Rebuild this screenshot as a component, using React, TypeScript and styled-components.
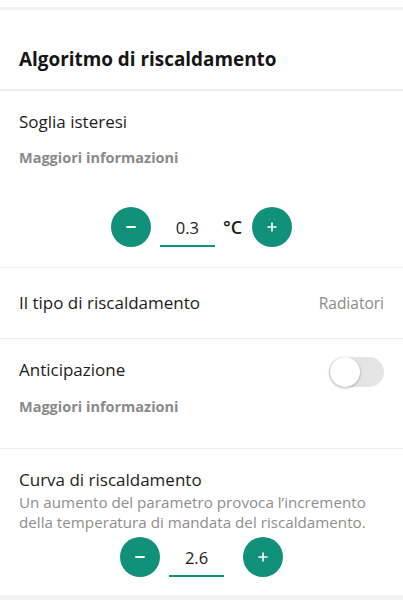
import React from "react";
import styled, { createGlobalStyle } from "styled-components";

const Global = createGlobalStyle`
  html, body { margin: 0; padding: 0; background: #ffffff; }
  body { font-family: "Open Sans", "Noto Sans", sans-serif; color: #1c1c1c; }
  * { box-sizing: border-box; }
`;

const Page = styled.div`
  width: 403px;
  height: 600px;
  display: flex;
  flex-direction: column;
  background: #f2f2f2;
  overflow: hidden;
`;

const PrevCardEnd = styled.div`
  height: 7px;
  background: #ffffff;
  flex: none;
`;

const Card = styled.div`
  margin-top: 3px;
  background: #ffffff;
  display: flex;
  flex-direction: column;
  flex: none;
`;

const Header = styled.div`
  padding: 36px 19px 17px;
`;

const Heading = styled.h2`
  margin: 0;
  font-size: 18.9px;
  line-height: 26px;
  font-weight: 700;
  color: #151515;
`;

const Divider = styled.div<{ $h?: number }>`
  height: ${(p) => p.$h ?? 1}px;
  background: #ededed;
`;

const Section = styled.div<{ $pb: number }>`
  display: flex;
  flex-direction: column;
  padding: 19px 19px ${(p) => p.$pb}px;
`;

const TitleRow = styled.div`
  height: 24px;
  display: flex;
  align-items: center;
  justify-content: space-between;
`;

const Title = styled.div`
  font-size: 17px;
  line-height: 24px;
  color: #1c1c1c;
`;

const MoreInfo = styled.div<{ $mt: number }>`
  margin-top: ${(p) => p.$mt}px;
  font-size: 14.5px;
  line-height: 20px;
  font-weight: 700;
  color: #8a8a8a;
`;

const Description = styled.div`
  font-size: 15.2px;
  line-height: 20px;
  color: #8e8e8e;
`;

const Stepper = styled.div<{ $mt: number }>`
  margin-top: ${(p) => p.$mt}px;
  display: flex;
  justify-content: center;
  align-items: center;
`;

const RoundButton = styled.button`
  width: 40px;
  height: 40px;
  border-radius: 50%;
  border: none;
  padding: 0;
  background: #12917a;
  display: flex;
  align-items: center;
  justify-content: center;
  flex: none;
`;

const ValueBox = styled.div<{ $ml: number; $mr: number }>`
  width: 55px;
  height: 40px;
  margin: 0 ${(p) => p.$mr}px 0 ${(p) => p.$ml}px;
  border-bottom: 2px solid #12917a;
  display: flex;
  align-items: center;
  justify-content: center;
  font-size: 16.5px;
  color: #1c1c1c;
  padding-top: 2px;
`;

const Unit = styled.div`
  font-size: 18px;
  font-weight: 600;
  color: #1c1c1c;
  margin-right: 10px;
`;

const Row = styled.div`
  height: 70px;
  padding: 0 19px;
  display: flex;
  align-items: center;
  justify-content: space-between;
`;

const RowValue = styled.div`
  font-size: 15.5px;
  color: #8a8a8a;
`;

const Switch = styled.div`
  width: 55px;
  height: 30px;
  border-radius: 15px;
  background: #e4e4e4;
  position: relative;
  margin-top: 4px;
  flex: none;
`;

const Knob = styled.div`
  position: absolute;
  left: 1px;
  top: 0;
  width: 30px;
  height: 30px;
  border-radius: 50%;
  background: #ffffff;
  box-shadow: 0 1px 3px rgba(0, 0, 0, 0.3);
`;

const Minus = () => (
  <svg width="12" height="12" viewBox="0 0 12 12">
    <path d="M2 6h8" stroke="#fff" strokeWidth="1.8" strokeLinecap="round" />
  </svg>
);

const Plus = () => (
  <svg width="12" height="12" viewBox="0 0 12 12">
    <path d="M2 6h8M6 2v8" stroke="#fff" strokeWidth="1.6" strokeLinecap="round" />
  </svg>
);

export default function App() {
  return (
    <Page>
      <Global />
      <PrevCardEnd />
      <Card>
        <Header>
          <Heading>Algoritmo di riscaldamento</Heading>
        </Header>
        <Divider $h={2} />
        <Section $pb={20}>
          <Title>Soglia isteresi</Title>
          <MoreInfo $mt={14}>Maggiori informazioni</MoreInfo>
          <Stepper $mt={39}>
            <RoundButton aria-label="diminuisci">
              <Minus />
            </RoundButton>
            <ValueBox $ml={9} $mr={8}>0.3</ValueBox>
            <Unit>°C</Unit>
            <RoundButton aria-label="aumenta">
              <Plus />
            </RoundButton>
          </Stepper>
        </Section>
        <Divider />
        <Row>
          <Title>Il tipo di riscaldamento</Title>
          <RowValue>Radiatori</RowValue>
        </Row>
        <Divider />
        <Section $pb={31}>
          <TitleRow>
            <Title>Anticipazione</Title>
            <Switch>
              <Knob />
            </Switch>
          </TitleRow>
          <MoreInfo $mt={15}>Maggiori informazioni</MoreInfo>
        </Section>
        <Divider />
        <Section $pb={18}>
          <Title>Curva di riscaldamento</Title>
          <Description>
            Un aumento del parametro provoca l’incremento
            <br />
            della temperatura di mandata del riscaldamento.
          </Description>
          <Stepper $mt={5}>
            <RoundButton aria-label="diminuisci">
              <Minus />
            </RoundButton>
            <ValueBox $ml={9} $mr={19}>2.6</ValueBox>
            <RoundButton aria-label="aumenta">
              <Plus />
            </RoundButton>
          </Stepper>
        </Section>
      </Card>
    </Page>
  );
}
